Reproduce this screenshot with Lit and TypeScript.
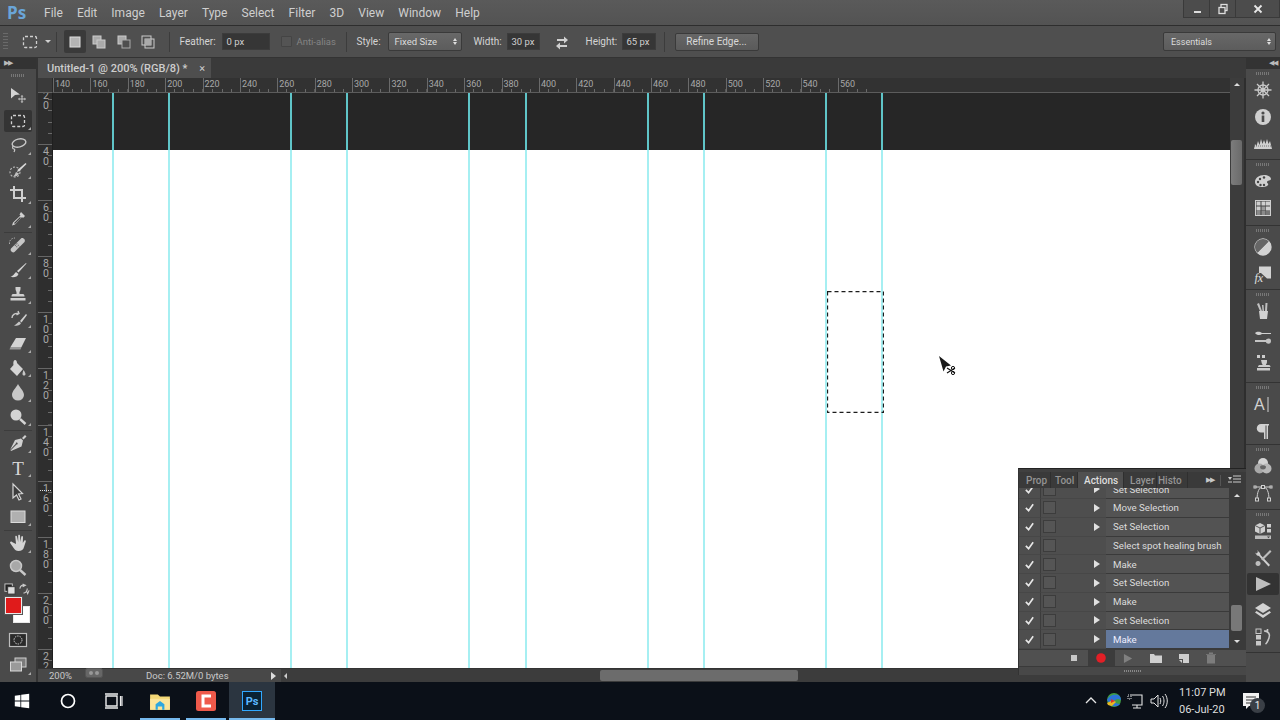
import { LitElement, html, css, svg } from "lit";
import { customElement } from "lit/decorators.js";

const G = "#c6c6c6";

const ic = (content: unknown, size = 20, box = 20) =>
  html`<svg width=${size} height=${size} viewBox="0 0 ${box} ${box}" fill=${G} stroke="none">${content}</svg>`;

const toolIcons: Record<string, unknown> = {
  move: svg`<path d="M3 2l9 6.500-5 .5-4 3.500z" fill="#d4d4d4"/><path d="M14 9l1.500 1.500h-1v2h2v-1l1.500 1.500-1.500 1.500v-1h-2v2h1L14 17l-1.500-1.500h1v-2h-2v1L10 13l1.500-1.500v1h2v-2h-1z"/>`,
  marquee: svg`<rect x="3.500" y="4.500" width="13" height="11" rx="1.500" fill="none" stroke="#d0d0d0" stroke-width="1.300" stroke-dasharray="3 2"/>`,
  lasso: svg`<ellipse cx="11" cy="8" rx="7" ry="4" transform="rotate(-14 11 8)" fill="none" stroke="#c8c8c8" stroke-width="1.400"/><path d="M5 11c-1 2 0 3 1 3s1 1 0 3" fill="none" stroke="#c8c8c8" stroke-width="1.200"/>`,
  quick: svg`<circle cx="7" cy="12" r="5" fill="none" stroke="#bbb" stroke-width="1.100" stroke-dasharray="2 1.500"/><path d="M17.500 3l1 1-7 7-2.500 1 1-2.500z" fill="#d8d8d8"/><path d="M8 12l3 1.500c-1 2.500-3 3-6 3 1.500-1 2-2.500 3-4.500z" fill="#c0c0c0"/>`,
  crop: svg`<path d="M6 2v12h12M2 6h12v12" fill="none" stroke="#d0d0d0" stroke-width="2"/>`,
  dropper: svg`<path d="M13 3l4 4-2 2-1-1-7 7.500-3 1 1-3 7.500-7-1-1z" fill="#d0d0d0"/><path d="M12.500 8.500l-6 6" stroke="#444" stroke-width="1.200"/>`,
  heal: svg`<path d="M3 13.500L13 3.500c2-1.500 5 1.500 3.500 3.500L6.500 17c-2 1.500-5-1.500-3.500-3.500z" fill="#c6c6c6"/><path d="M7 10l3 3M8.500 8.500l3 3" stroke="#666" stroke-width="1.300" stroke-dasharray="1 1"/><path d="M1.500 9C1 5 4 3 7 3" fill="none" stroke="#aaa" stroke-dasharray="1.500 1.200"/>`,
  brush: svg`<path d="M18 3L9 11l1.500 1.500L18.500 3.500z" fill="#d4d4d4"/><path d="M8 12l2.500 2c-1 3-4 3.500-8 3 2.500-1 3.500-3 5.500-5z" fill="#d4d4d4"/>`,
  stamp: svg`<path d="M7.500 3h5v2c0 2-1.500 2.500-1 5h3.500c1 0 1.500 1 1.500 2.500H3.500C3.500 11 4 10 5 10h3.500c.5-2.500-1-3-1-5z" fill="#d0d0d0"/><rect x="2.500" y="14" width="15" height="2.500" fill="#d0d0d0"/>`,
  history: svg`<path d="M18 5l-6 7 1.500 1.500L19 6z" fill="#d0d0d0"/><path d="M11 12.500l2 1.500c-1 2.500-3.500 3-7 2.500 2.200-.7 3-2.500 5-4z" fill="#c6c6c6"/><path d="M4 9c0-3 3-5 6-4.500M10 2l1 2.500-2.500 1.500" fill="none" stroke="#c8c8c8" stroke-width="1.400"/>`,
  eraser: svg`<path d="M8 5h10l-4.500 9H2.500z" fill="#d4d4d4"/><path d="M2.500 14h11l-1 2.500h-11z" fill="#9a9a9a"/>`,
  bucket: svg`<path d="M7 2c1.500 0 2 1.500 2 3l6 6-6 7-7-7 3.500-4c-.5-2 0-5 1.500-5z" fill="#d4d4d4"/><path d="M15.500 12c1 1.500 2 3 2 4s-.8 1.500-1.500 1.500-1.500-.5-1.500-1.500.5-2.500 1-4z" fill="#c6c6c6"/>`,
  drop: svg`<path d="M10 2c2 4 6 7 6 11a6 5.500 0 0 1-12 0c0-4 4-7 6-11z" fill="#c8c8c8"/>`,
  dodge: svg`<circle cx="8" cy="8" r="5.500" fill="#d4d4d4"/><path d="M12 12l5.500 5" stroke="#d4d4d4" stroke-width="2.400"/>`,
  pen: svg`<path d="M17 2l1.500 1.500-3 3-1.500-1.500z" fill="#d0d0d0"/><path d="M13 5.500l2 2-1.500 6L3 18l-.5-.5L8.500 11.500c.8.300 1.700-1 .8-1.800-.8-.5-1.800.2-1.500 1L2 17 7 7z" fill="#d0d0d0"/>`,
  t: svg`<text x="10" y="16.500" text-anchor="middle" font-family="'Liberation Serif',serif" font-size="19" fill="#d8d8d8">T</text>`,
  path: svg`<path d="M5 2l9.500 9.500-4 .5 2.500 5-2 1-2.500-5-3.500 3z" fill="#3c3c3c" stroke="#d4d4d4" stroke-width="1.200"/>`,
  rect: svg`<rect x="3" y="4" width="14" height="11.500" fill="#b0b0b0" stroke="#dcdcdc"/>`,
  hand: svg`<path d="M4 9c-1-1-2.500 0-1.700 1.200L6 15.500c1 1.500 2 2.500 4.500 2.500 3 0 5-1.500 5.500-4l1.800-5.500c.3-1.200-1.300-1.700-1.800-.5L14.800 10l.2-6c0-1.300-1.700-1.300-1.800 0l-.7 5-.5-6.300c0-1.300-1.800-1.300-1.800 0V9L9 3.500c-.2-1.200-1.800-1-1.700.3L8 11z" fill="#d4d4d4"/>`,
  zoom: svg`<circle cx="8" cy="8" r="5.500" fill="#a8a8a8" stroke="#c8c8c8" stroke-width="1.500"/><path d="M12 12l5.500 5" stroke="#c8c8c8" stroke-width="2.400"/>`,
  mask: svg`<rect x="1.500" y="3.500" width="17" height="13" fill="#2a2a2a" stroke="#bdbdbd" stroke-width="1.200"/><circle cx="10" cy="10" r="4" fill="none" stroke="#cfcfcf" stroke-dasharray="1.500 1"/>`,
  screen: svg`<rect x="7" y="3" width="11" height="9" fill="#7b7b7b" stroke="#cfcfcf"/><rect x="2.500" y="7" width="11" height="9" fill="#9a9a9a" stroke="#d8d8d8"/>`,
};

const dockIcons: Record<string, unknown> = {
  compass: svg`<g stroke="#c9c9c9" stroke-width="1.300" fill="none"><circle cx="10" cy="10" r="5"/><path d="M10 1.500v17M1.500 10h17M4 4l12 12M16 4L4 16"/></g><circle cx="10" cy="10" r="2" fill="#c9c9c9"/>`,
  info: svg`<circle cx="10" cy="10" r="8" fill="#cfcfcf"/><rect x="8.700" y="8.500" width="2.600" height="6.500" fill="#4b4b4b"/><circle cx="10" cy="6" r="1.600" fill="#4b4b4b"/>`,
  histo: svg`<path d="M1 16l1-5 1.500 2 1.500-5 1.500 4L8 6l1.500 5L11 7l1.500 4L14 6l1.500 5 1.500-3 2 8z" fill="#cfcfcf"/><path d="M1 13h18" stroke="#4b4b4b" stroke-width=".7" stroke-dasharray="1 1"/>`,
  palette: svg`<path d="M2 11c0-4 4-7 9-7 4 0 7 2 7 4 0 2-4 1-4 3 0 1.500 2 1.500 1 3-1 1.500-3 2-6 2-4 0-7-2-7-5z" fill="#d0d0d0"/><g fill="#444"><circle cx="5" cy="11" r="1.200"/><circle cx="7" cy="8" r="1.200"/><circle cx="11" cy="6.500" r="1.200"/><circle cx="7.500" cy="14" r="1.200"/><circle cx="11" cy="14" r="1.200"/></g>`,
  swatches: svg`<rect x="2.500" y="2.500" width="15" height="15" fill="#444" stroke="#cfcfcf"/><g fill="#cfcfcf"><rect x="3.500" y="3.500" width="4" height="4"/><rect x="8.500" y="3.500" width="4" height="4"/><rect x="13" y="3.500" width="4" height="4"/><rect x="3.500" y="8.500" width="4" height="4"/><rect x="8.500" y="8.500" width="4" height="4" fill="#9a9a9a"/><rect x="13" y="8.500" width="4" height="4"/><rect x="3.500" y="13" width="4" height="4" fill="#8a8a8a"/><rect x="8.500" y="13" width="4" height="4" fill="#8a8a8a"/><rect x="13" y="13" width="4" height="4" fill="#777"/></g>`,
  adjust: svg`<circle cx="10" cy="10" r="8" fill="#4f4f4f" stroke="#d2d2d2" stroke-width="1.300"/><path d="M15.700 4.300A8 8 0 0 1 4.300 15.700z" fill="#d2d2d2"/><path d="M4.300 15.700A8 8 0 0 1 15.700 4.300z" fill="#666"/>`,
  fx: svg`<path d="M6 2.500h12v12H14L8 9H6z" fill="#d2d2d2"/><text x="1.500" y="18" font-family="'Liberation Serif',serif" font-style="italic" font-size="12" fill="#e0e0e0">fx</text>`,
  brushes: svg`<path d="M6 10h9l-1 8H7z" fill="#d2d2d2"/><path d="M7 10L4 3l2-1 3 8M12 10l.5-8h2L14 10M9.500 10L9 4h1.500l.5 6" fill="#c0c0c0"/>`,
  presets: svg`<path d="M2 5c2-2 5-1.500 7 0h9v1H9c-2 1.500-5 1.500-7-1z" fill="#d0d0d0"/><path d="M2 12h11c0-1.500 5-3 5 1s-5 3-5 1H2z" fill="#c4c4c4"/>`,
  clone: svg`<rect x="4" y="1" width="3" height="3" fill="#ccc"/><rect x="9" y="1" width="3" height="3" fill="#ccc"/><path d="M8 6h6v2c0 2-1.500 2-1 3h3c1 0 1.500 1 1.500 2H5c0-1 .5-2 1.500-2h3c.5-1-1-1-1-3z" fill="#ccc"/><rect x="4" y="14" width="13" height="2.500" fill="#ccc"/>`,
  char: svg`<text x="1" y="16" font-family="'Liberation Sans',sans-serif" font-size="16" fill="#d2d2d2">A</text><rect x="14.500" y="3" width="1" height="15" fill="#d2d2d2"/>`,
  para: svg`<path d="M8 3h8v1.500h-1V18h-1.500V4.500h-1V18H11v-6.500H8a4.200 4.200 0 0 1 0-8.500z" fill="#d2d2d2"/>`,
  circles: svg`<circle cx="10" cy="7" r="5" fill="#d4d4d4"/><circle cx="6.500" cy="12.500" r="5" fill="#a8a8a8"/><circle cx="13.500" cy="12.500" r="5" fill="#b8b8b8"/><path d="M7 10.500a4 4 0 0 1 6 0 3 3 0 0 1-6 0z" fill="#666"/>`,
  bezier: svg`<path d="M4 17C4 9 6 4 10 4s6 5 6 13M1 4h18" fill="none" stroke="#cfcfcf"/><g fill="#444" stroke="#cfcfcf"><rect x="2.500" y="15" width="3" height="3"/><rect x="14.500" y="15" width="3" height="3"/><rect x="8.500" y="2.500" width="3" height="3"/><rect x="1" y="3" width="2" height="2"/><rect x="17" y="3" width="2" height="2"/></g>`,
  three: svg`<path d="M7 2l5 2.500v6L7 13l-5-2.500v-6z" fill="#cfcfcf"/><path d="M2 4.500L7 7l5-2.500M7 7v6" fill="none" stroke="#555"/><rect x="14" y="3" width="4" height="3.500" fill="#cfcfcf"/><rect x="14" y="8" width="4" height="3.500" fill="#cfcfcf"/><rect x="2" y="14.500" width="16" height="3.500" fill="#bbb"/><path d="M14 15.500h3l-1.500 1.800z" fill="#444"/>`,
  tools: svg`<path d="M4 2l3 3 .5 2L17 17l-1.500 1.500L6 8l-2-.5-2-3 1.500 1 1.500-1.500z" fill="#cfcfcf"/><path d="M17 2L8 11l1.500 1.500L18.500 3.500zM5 13a2.500 2.500 0 1 0 .1 0z" fill="#bdbdbd"/>`,
  play: svg`<path d="M3 3l15 7-15 7z" fill="#bdbdbd"/>`,
  layers: svg`<path d="M10 2l8 5-8 5-8-5z" fill="#d2d2d2"/><path d="M3.500 10L10 14l6.500-4 1.500 1.500L10 17l-8-5.500z" fill="#d2d2d2"/>`,
  histp: svg`<g fill="#c8c8c8"><rect x="3" y="2" width="5" height="4.500" fill="none" stroke="#c8c8c8"/><rect x="3" y="8" width="5" height="4.500"/><rect x="3" y="14" width="5" height="4.500"/></g><path d="M11 4h3.500v-2M11.500 4c4 .5 6 3 4.500 7s-2 5-3.500 6" fill="none" stroke="#c8c8c8" stroke-width="1.600"/>`,
};

type Tool = [string, boolean];
const toolGroups: Tool[][] = [
  [["move", false], ["marquee", true], ["lasso", true], ["quick", true], ["crop", true], ["dropper", true]],
  [["heal", true], ["brush", true], ["stamp", true], ["history", true], ["eraser", true], ["bucket", true], ["drop", true], ["dodge", true]],
  [["pen", true], ["t", true], ["path", true], ["rect", true]],
  [["hand", true], ["zoom", false]],
];

const dockGroups: { h: number; items: string[] }[] = [
  { h: 91, items: ["compass", "info", "histo"] },
  { h: 66, items: ["palette", "swatches"] },
  { h: 64, items: ["adjust", "fx"] },
  { h: 93, items: ["brushes", "presets", "clone"] },
  { h: 62, items: ["char", "para"] },
  { h: 65, items: ["circles", "bezier"] },
  { h: 143, items: ["three", "tools", "play", "layers", "histp"] },
];

const menus = ["File", "Edit", "Image", "Layer", "Type", "Select", "Filter", "3D", "View", "Window", "Help"];
const guides = [59, 115, 237, 293, 415, 472, 594, 650, 772, 828];
const hLabels = Array.from({ length: 22 }, (_, i) => 140 + i * 20);
const vLabels = ["20", "40", "60", "80", "100", "120", "140", "160", "180", "200", "220"];
const rows: [string, boolean][] = [
  ["Set Selection", true],
  ["Move Selection", true],
  ["Set Selection", true],
  ["Select spot healing brush", false],
  ["Make", true],
  ["Set Selection", true],
  ["Make", true],
  ["Set Selection", true],
  ["Make", true],
];
const tabs: { name: string; w: number; pad: number }[] = [
  { name: "Prop", w: 29, pad: 4 },
  { name: "Tool", w: 27, pad: 4 },
  { name: "Actions", w: 46, pad: 6 },
  { name: "Layer", w: 33, pad: 6 },
  { name: "Histo", w: 31, pad: 1 },
];

@customElement("app-root")
export class AppRoot extends LitElement {
  static styles = css`
    :host { display: block; width: 1280px; height: 720px; overflow: hidden; font-family: Roboto, "Open Sans", sans-serif; color: #d4d4d4; background: #0b1018; }
    svg { display: block; flex: none; }
    .app { width: 1280px; height: 720px; display: flex; flex-direction: column; }

    .menubar { height: 26px; flex: none; background: linear-gradient(#5a5a5a, #535353); display: flex; align-items: center; border-bottom: 1px solid #2e2e2e; box-sizing: border-box; font-size: 12px; color: #cfcfcf; }
    .logo { width: 44px; box-sizing: border-box; padding-left: 7px; font-weight: 700; font-size: 17px; color: #6aa5d8; font-family: "Open Sans", sans-serif; }
    .menus { display: flex; gap: 14.100px; }
    .winbtns { margin-left: auto; align-self: flex-start; height: 17px; display: flex; background: #4c4c4c; border: 1px solid #3a3a3a; border-top: none; }
    .winbtn { display: flex; align-items: center; justify-content: center; width: 25px; border-right: 1px solid #3a3a3a; }
    .winbtn.x { width: 43px; border-right: none; }

    .options { height: 32px; flex: none; background: #4f4f4f; display: flex; align-items: center; font-size: 10px; color: #d4d4d4; border-bottom: 1px solid #333; box-sizing: border-box; }
    .ogrip { width: 5px; height: 18px; margin-left: 3px; background: repeating-linear-gradient(#6a6a6a 0 1px, transparent 1px 3px); }
    .otool { margin-left: 12px; }
    .caret { margin-left: 5px; width: 0; height: 0; border-left: 3px solid transparent; border-right: 3px solid transparent; border-top: 3px solid #d0d0d0; }
    .osep { width: 1px; height: 20px; background: #3c3c3c; flex: none; }
    .opill { width: 22px; height: 23px; display: flex; align-items: center; justify-content: center; box-sizing: border-box; }
    .opill.on { background: #3a3a3a; border-radius: 2px; margin-left: 7px; }
    .obtn2 { width: 24.500px; display: flex; justify-content: center; }
    .lbl { white-space: nowrap; }
    .inp { background: #363636; border: 1px solid #3c3c3c; box-sizing: border-box; height: 17px; line-height: 15px; padding-left: 4px; font-size: 9.500px; color: #d0d0d0; }
    .check { width: 11px; height: 11px; box-sizing: border-box; background: #545454; border: 1px solid #444; border-radius: 1px; }
    .dim { color: #848484; font-size: 9.500px; }
    .select { height: 19px; box-sizing: border-box; background: linear-gradient(#686868, #5c5c5c); border: 1px solid #3a3a3a; border-radius: 2px; display: flex; align-items: center; justify-content: space-between; padding: 0 4px 0 6px; font-size: 9.500px; color: #dcdcdc; }
    .select.wk { font-size: 9px; width: 113px; margin-left: auto; margin-right: 4px; padding-left: 7px; }
    .updown { display: flex; flex-direction: column; gap: 1.500px; }
    .updown i { display: block; width: 0; height: 0; border-left: 2.500px solid transparent; border-right: 2.500px solid transparent; }
    .updown i:first-child { border-bottom: 3px solid #ddd; }
    .updown i:last-child { border-top: 3px solid #ddd; }
    .button { width: 84px; height: 18px; box-sizing: border-box; background: linear-gradient(#666, #5a5a5a); border: 1px solid #3a3a3a; border-radius: 2px; text-align: center; line-height: 15px; font-size: 10px; color: #d8d8d8; }

    .main { flex: 1; min-height: 0; display: flex; position: relative; background: #343434; }

    .toolbar { width: 36px; flex: none; background: #4a4a4a; display: flex; flex-direction: column; }
    .collapse { height: 11px; background: #333; display: flex; align-items: center; padding-left: 4px; font-size: 7px; color: #bbb; letter-spacing: -1px; flex: none; line-height: 1; }
    .collapse.right { justify-content: flex-end; padding-right: 3px; }
    .grip { height: 3px; width: 14px; margin: 5px auto 7px; background: repeating-linear-gradient(90deg, #777 0 1px, transparent 1px 2px); flex: none; }
    .tgroup { display: flex; flex-direction: column; flex: none; }
    .tgroup + .tgroup { border-top: 1px solid #3c3c3c; margin: 1px 4px 0; }
    .tgroup + .tgroup .tool { margin: 0 -4px; }
    .tool { height: 24.500px; width: 36px; display: flex; align-items: center; justify-content: center; position: relative; flex: none; }
    .tool.more::after { content: ""; position: absolute; right: 5px; bottom: 3px; border-left: 3px solid transparent; border-bottom: 3px solid #aaa; }
    .tool.sel::before { content: ""; position: absolute; left: 4px; right: 4px; top: 1px; bottom: 1px; background: #343434; border-radius: 2px; }
    .tool svg { position: relative; }
    .swapline { display: flex; justify-content: space-between; padding: 3px 6px 0 4px; height: 14px; flex: none; }
    .swatches { height: 30px; margin-left: 5px; flex: none; position: relative; }
    .fg, .bg { position: absolute; width: 17px; height: 17px; box-sizing: border-box; border: 1px solid #e8e8e8; }
    .fg { background: #e01b1b; left: 0; top: 0; z-index: 1; outline: 1px solid #555; }
    .bg { background: #fff; left: 8px; top: 9px; }
    .tool.mask { height: 24px; margin-top: 1px; }
    .tool.screen { height: 26px; }

    .gutter { width: 2px; flex: none; background: #343434; }

    .doc { flex: 1; min-width: 0; display: flex; flex-direction: column; }
    .tabrow { height: 20px; flex: none; background: #3a3a3a; display: flex; }
    .tab { width: 173px; background: #4e4e4e; display: flex; align-items: center; justify-content: space-between; box-sizing: border-box; padding: 0 6px 0 9px; font-size: 11px; font-weight: 500; color: #cdcdcd; }
    .tab span:last-child { font-weight: 400; }
    .body { flex: 1; min-height: 0; display: flex; }
    .viewcol { flex: 1; min-width: 0; display: flex; flex-direction: column; }
    .hrow { height: 15px; display: flex; flex: none; }
    .corner { width: 15px; flex: none; background: #3a3a3a; border-right: 1px solid #2a2a2a; border-bottom: 1px solid #666; box-sizing: border-box; }
    .hruler { flex: 1; background: #323232; display: flex; overflow: hidden; border-bottom: 1px solid #5c5c5c; box-sizing: border-box; }
    .hmark { width: 37.380px; flex: none; box-sizing: border-box; border-left: 1px solid #6a6a6a; padding-left: 1px; font-size: 9px; line-height: 12px; color: #a8a8a8;
      background: repeating-linear-gradient(90deg, transparent 0 8.350px, #6a6a6a 8.350px 9.350px) bottom / 100% 3px no-repeat; }
    .vrow { flex: 1; min-height: 0; display: flex; }
    .vruler { width: 15px; flex: none; background: #2e2e2e; overflow: hidden; position: relative; border-right: 1px solid #1f1f1f; box-sizing: border-box; }
    .vinner { margin-top: -5px; }
    .vmark { height: 56.100px; box-sizing: border-box; border-top: 1px solid #666; padding: 2px 0 0 5px; font-size: 10.500px; line-height: 10px; color: #a8a8a8;
      background: repeating-linear-gradient(transparent 0 10.200px, #6a6a6a 10.200px 11.220px) right / 4px 100% no-repeat; }
    .vmark div { height: 10px; }
    .mousepos { position: absolute; left: 2px; right: 1px; top: 397px; border-top: 1px dotted #ddd; }

    .canvas { flex: 1; min-width: 0; position: relative; background: #fff; overflow: hidden; }
    .band { height: 57px; background: #262626; }
    .guide { position: absolute; top: 0; bottom: 0; width: 2px; background: #a6eff2; }
    .guide::before { content: ""; position: absolute; left: 0; top: 0; width: 2px; height: 57px; background: #5fc4c8; }
    .selection { position: absolute; left: 774px; top: 198px; }
    .cursor { position: absolute; left: 885px; top: 262px; }

    .vscroll { width: 16px; flex: none; background: #3c3c3c; position: relative; border-right: 2px solid #2e2e2e; box-sizing: border-box; }
    .tri-up { position: absolute; left: 4px; top: 5px; border-left: 3px solid transparent; border-right: 3px solid transparent; border-bottom: 3px solid #ddd; }
    .vthumb { position: absolute; left: 1px; top: 62px; width: 11px; height: 45px; border-radius: 2px; background: linear-gradient(90deg, #7c7c7c, #6a6a6a); }

    .status { height: 14px; flex: none; background: #484848; display: flex; align-items: center; font-size: 9.500px; color: #c8c8c8; border-top: 1px solid #333; box-sizing: border-box; }
    .zoompct { width: 47px; padding-left: 11px; box-sizing: border-box; }
    .docinfo { width: 168px; padding-left: 43px; box-sizing: border-box; white-space: nowrap; }
    .tri-r { border-top: 4px solid transparent; border-bottom: 4px solid transparent; border-left: 5px solid #ddd; }
    .hscroll { flex: 1; height: 13px; margin-left: 5px; background: #3c3c3c; position: relative; }
    .tri-l { position: absolute; left: 3px; top: 4px; border-top: 3px solid transparent; border-bottom: 3px solid transparent; border-right: 3px solid #ccc; }
    .hthumb { position: absolute; left: 319px; top: 1px; width: 198px; height: 11px; border-radius: 2px; background: #6c6c6c; }

    .dock { width: 34px; flex: none; background: #4a4a4a; display: flex; flex-direction: column; }
    .dgroup { border-bottom: 1px solid #333; box-sizing: border-box; flex: none; }
    .dgroup .grip { margin: 3px auto 2px; }
    .ditem { height: 26.500px; display: flex; align-items: center; justify-content: center; }
    .ditem.active svg { background: #333; box-sizing: content-box; padding: 1px 6px; border-radius: 2px; }

    .panel { position: absolute; left: 1018px; top: 410px; width: 228px; height: 207px; background: #4a4a4a; border-top: 1px solid #222; border-left: 1px solid #333; display: flex; flex-direction: column; box-sizing: border-box; }
    .phead { height: 3px; flex: none; background: #404040; }
    .ptabs { height: 16px; flex: none; background: #3a3a3a; display: flex; align-items: stretch; font-size: 10px; font-weight: 500; color: #949494; padding-left: 3px; position: relative; }
    .ptab { display: flex; align-items: center; box-sizing: border-box; border-right: 1px solid #2f2f2f; overflow: hidden; white-space: nowrap; flex: none; }
    .ptab.on { background: #505050; color: #dedede; }
    .ptools { margin-left: auto; display: flex; align-items: center; gap: 6px; padding-right: 5px; color: #c8c8c8; font-size: 7px; letter-spacing: -1px; }
    .ptools .pdiv { width: 1px; height: 11px; background: #555; }
    .pbody { height: 161px; flex: none; display: flex; }
    .plist { width: 210px; flex: none; display: flex; flex-direction: column; justify-content: flex-end; overflow: hidden; background: #3e3e3e; }
    .row { height: 18.750px; flex: none; display: flex; align-items: center; box-sizing: border-box; font-size: 9.700px; color: #dcdcdc; }
    .c1 { width: 22px; height: 100%; flex: none; display: flex; align-items: center; justify-content: center; background: #4e4e4e; border-right: 1px solid #3c3c3c; box-sizing: border-box; border-bottom: 1px solid #474747; }
    .c2 { width: 46px; height: 100%; flex: none; background: #4e4e4e; display: flex; align-items: center; border-bottom: 1px solid #474747; box-sizing: border-box; padding-left: 2px; }
    .sq { width: 11px; height: 11px; border: 1px solid #3c3c3c; background: #555; }
    .c3 { width: 19px; height: 100%; flex: none; background: #4e4e4e; display: flex; align-items: center; justify-content: center; border-bottom: 1px solid #474747; box-sizing: border-box; }
    .tri-s { border-top: 4px solid transparent; border-bottom: 4px solid transparent; border-left: 6px solid #e0e0e0; }
    .c4 { flex: 1; height: 100%; background: #535353; border-bottom: 1px solid #3a3a3a; box-sizing: border-box; display: flex; align-items: center; padding-left: 7px; white-space: nowrap; }
    .row.hl .c4 { background: #64799c; color: #eef; }
    .pscroll { flex: 1; background: #3a3a3a; position: relative; }
    .pup { position: absolute; left: 5px; top: 6px; border-left: 3px solid transparent; border-right: 3px solid transparent; border-bottom: 3px solid #ddd; }
    .pdown { position: absolute; left: 5px; bottom: 6px; border-left: 3px solid transparent; border-right: 3px solid transparent; border-top: 3px solid #ddd; }
    .pthumb { position: absolute; left: 2px; top: 117px; width: 11px; height: 26px; border-radius: 2px; background: #787878; }
    .pfoot { height: 16px; flex: none; background: #505050; border-top: 1px solid #3a3a3a; display: flex; align-items: center; box-sizing: content-box; }
    .pspace { width: 41px; flex: none; }
    .pbtn { width: 27.500px; height: 100%; display: flex; align-items: center; justify-content: center; flex: none; }
    .pbtn.rec { background: #3c3c3c; }
    .pend { flex: 1; background: #484848; border-top: 1px solid #3a3a3a; display: flex; justify-content: center; align-items: center; }
    .pend i { display: block; width: 18px; height: 2px; background: repeating-linear-gradient(90deg, #888 0 1px, transparent 1px 2px); }

    .taskbar { height: 38px; flex: none; background: #0b1018; display: flex; align-items: stretch; }
    .tbtn { width: 46px; flex: none; display: flex; align-items: center; justify-content: center; position: relative; }
    .tbtn.start { margin-left: -1px; }
    .tbtn.open::after { content: ""; position: absolute; left: 3px; right: 3px; bottom: 0; height: 2px; background: #76b9ed; }
    .tbtn.active { background: #2b3540; }
    .tbtn.active::after { left: 0; right: 0; }
    .psbox { width: 20px; height: 20px; background: #0a2233; border: 1.500px solid #31a8ff; box-sizing: border-box; color: #5ab8ff; font-size: 11px; font-weight: 700; display: flex; align-items: center; justify-content: center; }
    .tray { margin-left: auto; display: flex; align-items: center; }
    .trayi { width: 22.500px; display: flex; justify-content: center; }
    .clock { width: 45px; margin-left: 9px; text-align: right; white-space: nowrap; font-size: 11px; line-height: 17px; color: #dedede; flex: none; }
    .notif { width: 42px; margin: 0 8px 0 6px; display: flex; justify-content: center; position: relative; }
    .badge { position: absolute; left: 20px; top: 7px; width: 15px; height: 15px; border-radius: 50%; background: #3a3f46; color: #eee; font-size: 10px; line-height: 15px; text-align: center; }
  `;

  private options() {
    return html`<div class="options">
      <div class="ogrip"></div>
      <div class="otool">${ic(toolIcons.marquee, 20)}</div>
      <div class="caret"></div>
      <div class="osep" style="margin-left:5px"></div>
      <div class="opill on">${ic(svg`<rect x="3" y="3" width="10" height="10" fill="#b4b4b4" stroke="#ddd"/>`, 16, 16)}</div>
      <div class="obtn2" style="margin-left:1px">${ic(svg`<rect x="2" y="2" width="8" height="8" fill="#aaa" stroke="#ccc"/><rect x="6" y="6" width="8" height="8" fill="#aaa" stroke="#ccc"/>`, 16, 16)}</div>
      <div class="obtn2">${ic(svg`<rect x="2" y="2" width="8" height="8" fill="#aaa" stroke="#ccc"/><rect x="6" y="6" width="8" height="8" fill="#4f4f4f" stroke="#aaa"/>`, 16, 16)}</div>
      <div class="obtn2">${ic(svg`<rect x="2" y="2" width="9" height="9" fill="none" stroke="#ccc"/><rect x="5" y="5" width="9" height="9" fill="none" stroke="#ccc"/><rect x="5" y="5" width="6" height="6" fill="#aaa"/>`, 16, 16)}</div>
      <div class="osep" style="margin-left:8px"></div>
      <div class="lbl" style="margin-left:10px;width:42px">Feather:</div>
      <div class="inp" style="width:48px">0 px</div>
      <div class="check" style="margin-left:11px"></div>
      <div class="lbl dim" style="margin-left:5px;width:49px">Anti-alias</div>
      <div class="osep"></div>
      <div class="lbl" style="margin-left:10px;width:31px">Style:</div>
      <div class="select" style="width:74px"><span>Fixed Size</span><span class="updown"><i></i><i></i></span></div>
      <div class="lbl" style="margin-left:12px;width:33px">Width:</div>
      <div class="inp" style="width:33px">30 px</div>
      <div style="margin-left:14px;width:32px">${ic(svg`<path d="M3 5h7V2.500L14 6l-4 3.500V7H3zM13 11H6V8.500L2 12l4 3.500V13h7z" fill="#d0d0d0"/>`, 16, 16)}</div>
      <div class="lbl" style="width:36px">Height:</div>
      <div class="inp" style="width:34px">65 px</div>
      <div class="osep" style="margin-left:8px"></div>
      <div class="button" style="margin-left:10px">Refine Edge...</div>
      <div class="select wk"><span>Essentials</span><span class="updown"><i></i><i></i></span></div>
    </div>`;
  }

  private toolbar() {
    return html`<div class="toolbar">
      <div class="collapse">▶▶</div>
      <div class="grip"></div>
      ${toolGroups.map(
        (g) => html`<div class="tgroup">
          ${g.map(
            (t) => html`<div class="tool ${t[1] ? "more" : ""} ${t[0] === "marquee" ? "sel" : ""}">${ic(toolIcons[t[0]])}</div>`
          )}
        </div>`
      )}
      <div class="swapline">
        ${ic(svg`<rect x="1" y="1" width="8" height="8" fill="#222" stroke="#ccc"/><rect x="4" y="4" width="8" height="8" fill="#ddd" stroke="#333"/>`, 12, 13)}
        ${ic(svg`<path d="M2 6a5 5 0 0 1 5-4M5 1L8 2.500 5 4M10 6a5 5 0 0 1-4 5M9 8l1.500 3.500L12 8" fill="none" stroke="#ccc" stroke-width="1.200"/>`, 12, 13)}
      </div>
      <div class="swatches"><div class="fg"></div><div class="bg"></div></div>
      <div class="tool mask">${ic(toolIcons.mask)}</div>
      <div class="tool more screen">${ic(toolIcons.screen)}</div>
    </div>`;
  }

  private canvas() {
    return html`<div class="canvas">
      <div class="band"></div>
      ${guides.map((x) => html`<div class="guide" style="left:${x}px"></div>`)}
      <svg class="selection" width="57" height="122" viewBox="0 0 57 122">
        <rect x="0.500" y="0.500" width="56" height="121" fill="none" stroke="#1c1c1c" stroke-width="1.300" stroke-dasharray="4 3"/>
      </svg>
      <svg class="cursor" width="24" height="24" viewBox="0 0 24 24">
        <path d="M1 1l12 9.500-5 1-2.500 5z" fill="#1a1a1a"/>
        <path d="M9 13l8 5M9 18l8-5" stroke="#111" stroke-width="1.200"/>
        <circle cx="15" cy="13" r="1.600" fill="none" stroke="#111"/><circle cx="15" cy="18" r="1.600" fill="none" stroke="#111"/>
      </svg>
    </div>`;
  }

  private doc() {
    return html`<div class="doc">
      <div class="tabrow"><div class="tab"><span>Untitled-1 @ 200% (RGB/8) *</span><span>×</span></div></div>
      <div class="body">
        <div class="viewcol">
          <div class="hrow">
            <div class="corner"></div>
            <div class="hruler">${hLabels.map((n) => html`<div class="hmark">${n <= 560 ? n : ""}</div>`)}</div>
          </div>
          <div class="vrow">
            <div class="vruler">
              <div class="vinner">
                ${vLabels.map((l) => html`<div class="vmark">${[...l].map((d) => html`<div>${d}</div>`)}</div>`)}
              </div>
              <div class="mousepos"></div>
            </div>
            ${this.canvas()}
          </div>
        </div>
        <div class="vscroll"><div class="tri-up"></div><div class="vthumb"></div></div>
      </div>
      <div class="status">
        <div class="zoompct">200%</div>
        ${ic(svg`<rect x="0.500" y="1.500" width="17" height="9" rx="2" fill="#666" stroke="#555"/><circle cx="6" cy="6" r="2" fill="#999"/><circle cx="12" cy="6" r="2" fill="#999"/>`, 18, 18)}
        <div class="docinfo">Doc: 6.52M/0 bytes</div>
        <div class="tri-r"></div>
        <div class="hscroll"><div class="tri-l"></div><div class="hthumb"></div></div>
      </div>
    </div>`;
  }

  private panel() {
    return html`<div class="panel">
      <div class="phead"></div>
      <div class="ptabs">
        ${tabs.map(
          (t) => html`<div class="ptab ${t.name === "Actions" ? "on" : ""}" style="width:${t.w}px;padding-left:${t.pad}px">${t.name}</div>`
        )}
        <div class="ptools"><span>▶▶</span><span class="pdiv"></span>
          ${ic(svg`<path d="M1 4h4L3 7z" fill="#ccc"/><path d="M6 3h8M6 6h8M6 9h8M1 9h4" stroke="#ccc"/>`, 14, 14)}
        </div>
      </div>
      <div class="pbody">
        <div class="plist">
          ${rows.map(
            (r, i) => html`<div class="row ${i === rows.length - 1 ? "hl" : ""}">
              <div class="c1">${ic(svg`<path d="M2 6.500l3 3L10 2.500" fill="none" stroke="#e8e8e8" stroke-width="1.800"/>`, 11, 12)}</div>
              <div class="c2"><div class="sq"></div></div>
              <div class="c3">${r[1] ? html`<div class="tri-s"></div>` : ""}</div>
              <div class="c4">${r[0]}</div>
            </div>`
          )}
        </div>
        <div class="pscroll"><div class="pup"></div><div class="pthumb"></div><div class="pdown"></div></div>
      </div>
      <div class="pfoot">
        <div class="pspace"></div>
        <div class="pbtn">${ic(svg`<rect x="2" y="2" width="6" height="6" fill="#c8c8c8"/>`, 10, 10)}</div>
        <div class="pbtn rec">${ic(svg`<circle cx="6" cy="6" r="4.800" fill="#e21f26"/>`, 12, 12)}</div>
        <div class="pbtn">${ic(svg`<path d="M1 1l9 5-9 5z" fill="#808080"/>`, 11, 12)}</div>
        <div class="pbtn">${ic(svg`<path d="M1 3h4l1 1.500h7V12H1z" fill="#d0d0d0"/>`, 14, 14)}</div>
        <div class="pbtn">${ic(svg`<path d="M2 3h10v9H6V8H2z" fill="#d0d0d0"/><path d="M2 9h3v3z" fill="#d0d0d0"/>`, 14, 14)}</div>
        <div class="pbtn">${ic(svg`<path d="M3 4h8v8.500H3zM2 3h10v.800H2zM5 1.500h4V3H5z" fill="#7c7c7c"/>`, 14, 14)}</div>
      </div>
      <div class="pend"><i></i></div>
    </div>`;
  }

  private dock() {
    return html`<div class="dock">
      <div class="collapse right">◀◀</div>
      ${dockGroups.map(
        (g) => html`<div class="dgroup" style="height:${g.h}px">
          <div class="grip"></div>
          ${g.items.map(
            (n) => html`<div class="ditem ${n === "play" ? "active" : ""}">${ic(dockIcons[n], 20)}</div>`
          )}
        </div>`
      )}
    </div>`;
  }

  private taskbar() {
    return html`<div class="taskbar">
      <div class="tbtn start">${ic(svg`<path d="M1 3.500l7-1v7H1zM9 2.300l10-1.500v8.700H9zM1 10.500h7v7l-7-1zM9 10.500h10v8.700l-10-1.500z" fill="#fff"/>`, 16, 20)}</div>
      <div class="tbtn">${ic(svg`<circle cx="10" cy="10" r="6.500" fill="none" stroke="#fff" stroke-width="1.700"/>`, 20)}</div>
      <div class="tbtn">${ic(svg`<path d="M2 5h11v10H2zM1 3h13M1 17h13" fill="none" stroke="#eee" stroke-width="1.400"/><path d="M16.500 5v10M18 5v10" stroke="#eee" stroke-width="1.200"/>`, 20)}</div>
      <div class="tbtn open">${ic(svg`<path d="M1 4h7l2 2h9v12H1z" fill="#f3d775"/><path d="M1 8h18v10H1z" fill="#fbe49a"/><path d="M6 18v-5l4-3 4 3v5h-2v-3H8v3z" fill="#2ea7e0"/>`, 22)}</div>
      <div class="tbtn open">${ic(svg`<rect x="1" y="1" width="20" height="20" rx="2.500" fill="#ef5a4b"/><path d="M16 6H8v10h8" fill="none" stroke="#fff" stroke-width="3"/>`, 22, 22)}</div>
      <div class="tbtn open active"><div class="psbox">Ps</div></div>
      <div class="tray">
        <div class="trayi">${ic(svg`<path d="M2 9l5-5 5 5" fill="none" stroke="#e6e6e6" stroke-width="1.300"/>`, 14, 14)}</div>
        <div class="trayi">${ic(svg`<circle cx="10" cy="9" r="7" fill="#3f9b46"/><path d="M3 9c2-5 7-6 11-5 2 .5 3 3 3 5-3-2-5-1-7 1 1 2 3 3 6 3-2 3-8 3-10 0z" fill="#2c74d8"/><path d="M3 12l6-3 3 2-4 4-4-1z" fill="#e8b821"/><path d="M7 8l4 2-4 2z" fill="#d5332e"/>`, 20)}</div>
        <div class="trayi">${ic(svg`<path d="M5 4h11v10H6M11 14v3M7 17h8" fill="none" stroke="#e6e6e6" stroke-width="1.100"/><path d="M2 4h3v4h-3z" fill="none" stroke="#e6e6e6" stroke-dasharray="1 1"/>`, 20)}</div>
        <div class="trayi">${ic(svg`<path d="M2 8h3l4-4v12l-4-4H2z" fill="none" stroke="#e6e6e6"/><path d="M11 7c1 2 1 4 0 6M13.500 5c2 3 2 7 0 10M16 3c3 4 3 10 0 14" fill="none" stroke="#e6e6e6"/>`, 20)}</div>
        <div class="clock"><div>11:07 PM</div><div>06-Jul-20</div></div>
        <div class="notif">
          ${ic(svg`<path d="M2 2h16v13H8l-3 3v-3H2z" fill="#f2f2f2"/><path d="M5 6h10M5 9h10M5 12h6" stroke="#333"/>`, 20)}
          <div class="badge">1</div>
        </div>
      </div>
    </div>`;
  }

  render() {
    return html`<div class="app">
      <div class="menubar">
        <div class="logo">Ps</div>
        <div class="menus">${menus.map((m) => html`<span>${m}</span>`)}</div>
        <div class="winbtns">
          <div class="winbtn">${ic(svg`<rect x="3" y="8" width="7" height="2" fill="#ddd"/>`, 12, 12)}</div>
          <div class="winbtn">${ic(svg`<rect x="4" y="1.500" width="6" height="6" fill="none" stroke="#ddd" stroke-width="1.300"/><rect x="2" y="4.500" width="6" height="6" fill="#4c4c4c" stroke="#ddd" stroke-width="1.300"/>`, 12, 12)}</div>
          <div class="winbtn x">${ic(svg`<path d="M2.500 2.500l7 7M9.500 2.500l-7 7" stroke="#e8e8e8" stroke-width="1.800"/>`, 12, 12)}</div>
        </div>
      </div>
      ${this.options()}
      <div class="main">
        ${this.toolbar()}
        <div class="gutter"></div>
        ${this.doc()}
        ${this.dock()}
        ${this.panel()}
      </div>
      ${this.taskbar()}
    </div>`;
  }
}
